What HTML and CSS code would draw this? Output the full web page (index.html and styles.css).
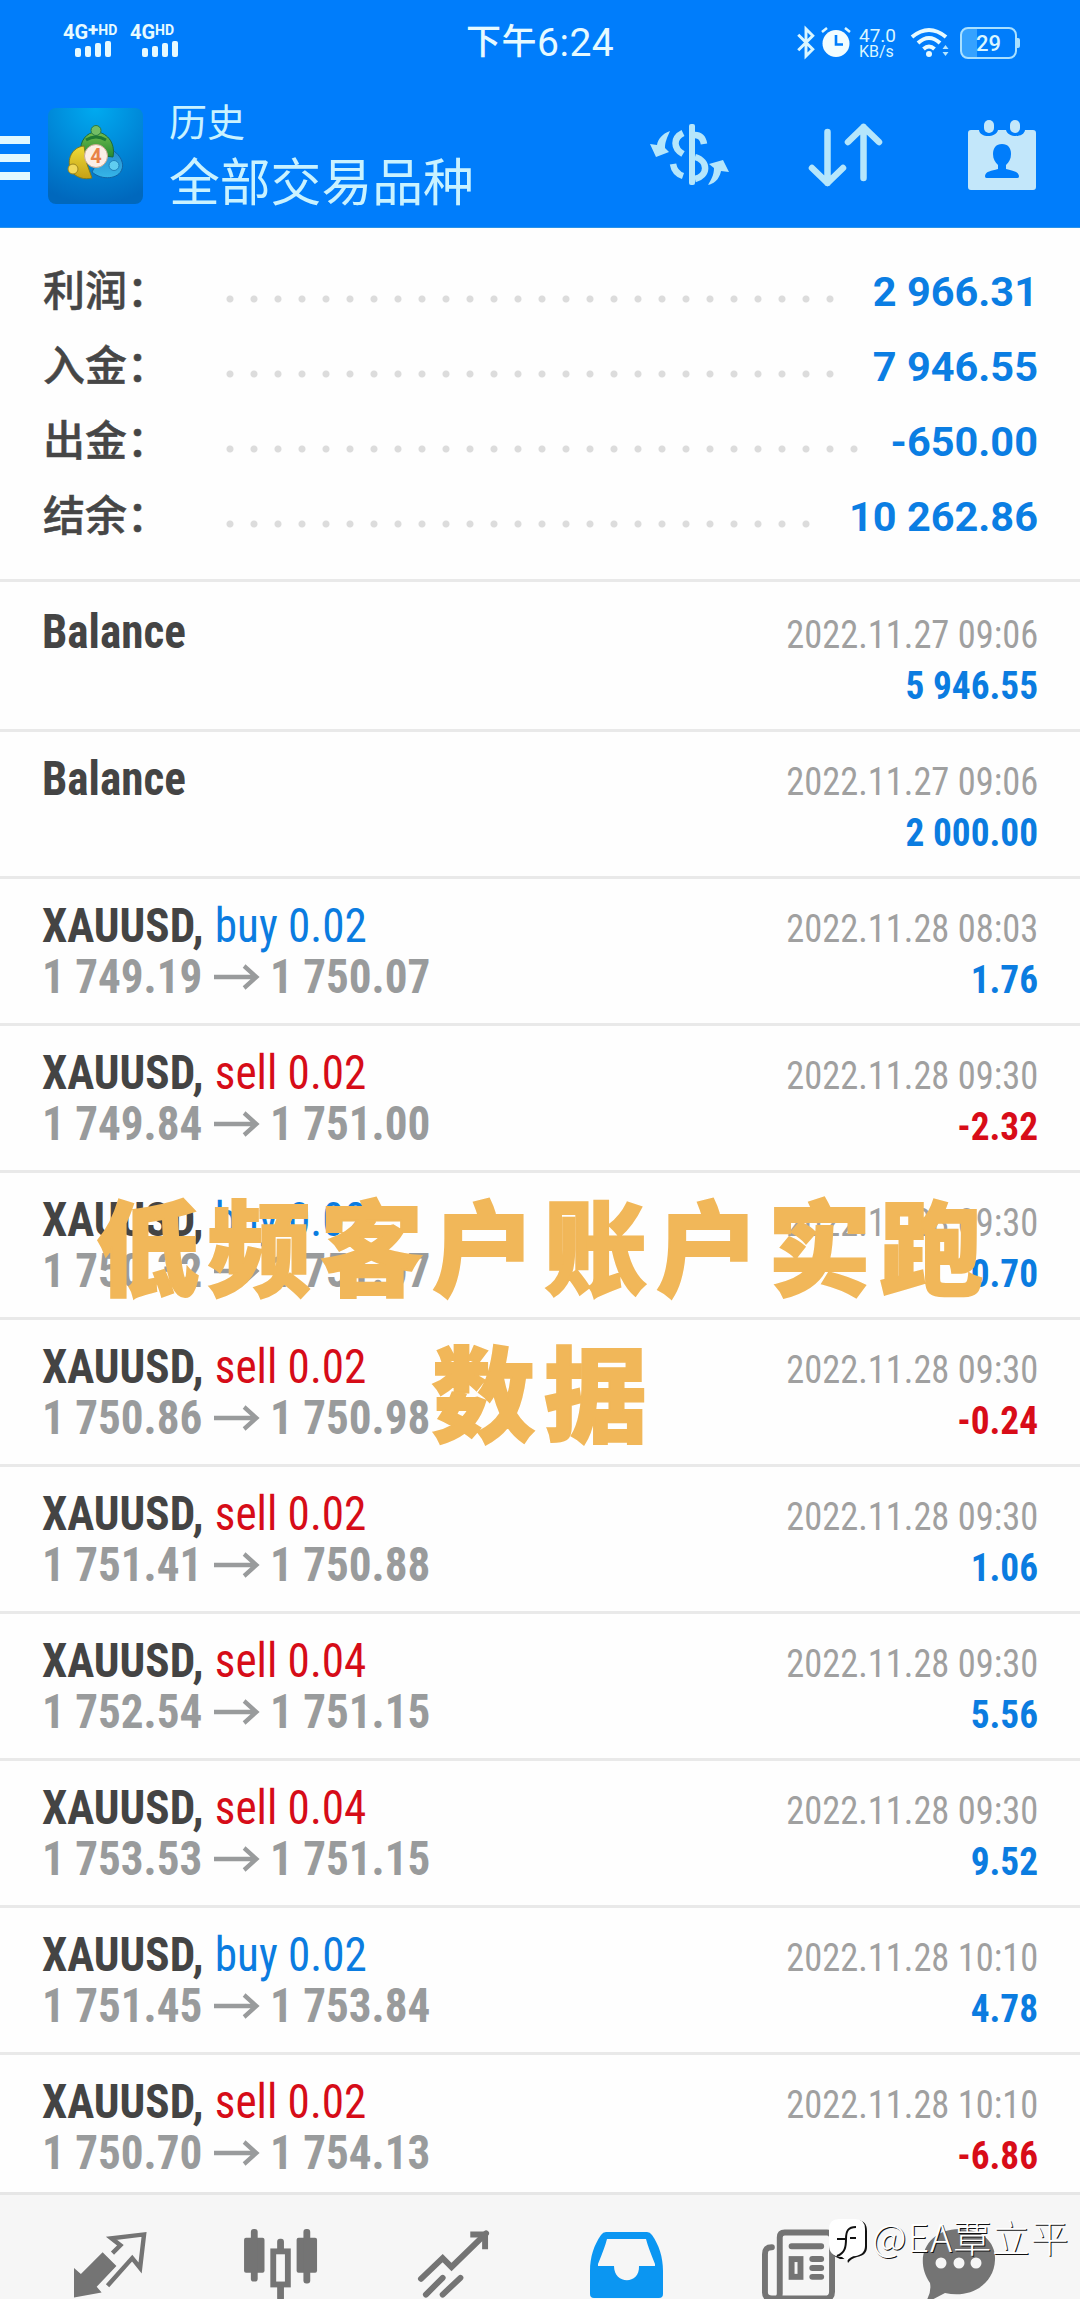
FILE: index.html
```html
<!DOCTYPE html>
<html lang="zh-CN">
<head>
<meta charset="utf-8">
<title>历史</title>
<link rel="stylesheet" href="styles.css">
</head>
<body>
<div class="phone">
  <header class="top">
    <div class="status">
      <div class="sims">
        <div class="sim"><div class="net">4G<b>+</b><sup>HD</sup></div><div class="bars"><i></i><i></i><i></i><i></i></div></div>
        <div class="sim second"><div class="net">4G<sup>HD</sup></div><div class="bars"><i></i><i></i><i></i><i></i></div></div>
      </div>
      <div class="clock"><span>下午</span>6:24</div>
      <div class="indicators">
        <svg class="bt" viewBox="0 0 20 32"><path d="M2 8l15 15-7 7V2l7 7L2 24" fill="none" stroke="#d9f6ff" stroke-width="3"/></svg>
        <svg class="alarm" viewBox="0 0 30 32"><circle cx="15" cy="17.500" r="13.500" fill="#f2fdff"/><path d="M1 6l5-4M29 6l-5-4" stroke="#d9f6ff" stroke-width="2.500"/><path d="M15 9v9.500h7" fill="none" stroke="#007dfb" stroke-width="2.600"/></svg>
        <div class="speed"><span>47.0</span><span>KB/s</span></div>
        <svg class="wifi" viewBox="0 0 38 30"><g fill="none" stroke="#e6faff" stroke-width="4"><path d="M1 9Q18-5 35 9"/><path d="M7 15Q18 5 29 15"/><path d="M12.500 21Q18 16 23.500 21"/></g><circle cx="18" cy="26" r="3" fill="#e6faff"/><path d="M31.500 21l3-4 3 4zM31.500 24l3 4 3-4z" fill="#b5e6ff"/></svg>
        <div class="battery"><span>29</span></div>
      </div>
    </div>
    <div class="appbar">
      <div class="menu"><i></i><i></i><i></i></div>
      <svg class="logo" viewBox="0 0 95 96">
        <defs>
          <radialGradient id="lg" cx=".5" cy="0" r="1"><stop offset="0" stop-color="#00aaf0"/><stop offset=".55" stop-color="#0085d6"/><stop offset="1" stop-color="#0068bd"/></radialGradient>
          <linearGradient id="gr" x2="0" y2="1"><stop stop-color="#73bd4d"/><stop offset="1" stop-color="#258b32"/></linearGradient>
          <linearGradient id="ye" x2="0" y2="1"><stop stop-color="#f0dc38"/><stop offset="1" stop-color="#c4a016"/></linearGradient>
          <linearGradient id="bl" x2="0" y2="1"><stop stop-color="#2488cc"/><stop offset="1" stop-color="#35b5e8"/></linearGradient>
        </defs>
        <rect width="95" height="96" rx="8" fill="url(#lg)"/>
        <path d="M57 39c12 3 20 14 17 22-3 10-20 12-30 3z" fill="url(#bl)" stroke="#1264a5"/>
        <path d="M33 45c-2-12 6-21 15-21s20 9 17 25z" fill="url(#gr)" stroke="#1c6a3a"/>
        <path d="M38 32q10-6 20 0" fill="none" stroke="#1f7a33" stroke-width="3"/>
        <path d="M36 38c-12 1-18 14-13 24 4 8 14 10 21 8l-5-14z" fill="url(#ye)" stroke="#7d7a20"/>
        <circle cx="48" cy="22.500" r="5" fill="#72bd65" stroke="#287b43"/>
        <circle cx="25" cy="61" r="5" fill="#f1d95c" stroke="#9b861b"/>
        <circle cx="66" cy="57.500" r="5" fill="#60cdf0" stroke="#2080b9"/>
        <circle cx="48" cy="48" r="11.500" fill="#fbeee6" stroke="#c9a890"/>
        <text x="48" y="55" text-anchor="middle" class="logo-num">4</text>
      </svg>
      <div class="titles"><div class="t1">历史</div><div class="t2">全部交易品种</div></div>
      <div class="actions">
        <svg class="a-cur" viewBox="0 0 79 62"><g fill="#b5e6fb"><path d="M20 7C12 10 8 15 7 21L0 20l6 13 13-5-4-4c0-6 2-10 5-17z"/><path d="M58 61c9-2 12-9 13-14l8 1-6-12-14 4 5 4c0 7-3 12-6 17z"/><rect x="39" y="0" width="6" height="61" rx="2"/></g><g fill="none" stroke="#b5e6fb" stroke-width="6.500"><path d="M33 9C23 14 23 24 33 30M23 40c1 6 4 10 10 12"/><path d="M45 11c5 0 8 3 9 9M45 33c14 4 13 19 0 22"/></g></svg>
        <svg class="a-sort" viewBox="0 0 73 64"><g fill="none" stroke="#b5e6fb" stroke-width="6.500" stroke-linecap="round" stroke-linejoin="round"><path d="M18.500 9v51M3 45l15.500 15L34 45M54.500 55V4M39 19L54.500 4 70 19"/></g></svg>
        <svg class="a-cal" viewBox="0 0 68 70"><path d="M3 10h8c1 8 17 8 19 0h8c2 8 18 8 19 0h8q3 0 3 3v54q0 3-3 3H3q-3 0-3-3V13q0-3 3-3z" fill="#c3e7fa"/><rect x="16" y="0" width="10" height="13" rx="5" fill="#c3e7fa"/><rect x="42" y="0" width="10" height="13" rx="5" fill="#c3e7fa"/><path d="M34 24c6 0 9 4 9 10 0 5-2 8-5 11v4c7 2 12 2 13 7 0 2-1 2-3 2H20c-2 0-3 0-3-2 1-5 6-5 13-7v-4c-3-3-5-6-5-11 0-6 3-10 9-10z" fill="#007dfb"/></svg>
      </div>
    </div>
  </header>

  <section class="summary">
    <div class="sum"><span class="lab">利润：</span><i class="dots"></i><b>2 966.31</b></div>
    <div class="sum"><span class="lab">入金：</span><i class="dots"></i><b>7 946.55</b></div>
    <div class="sum"><span class="lab">出金：</span><i class="dots"></i><b>-650.00</b></div>
    <div class="sum"><span class="lab">结余：</span><i class="dots"></i><b>10 262.86</b></div>
  </section>

  <main class="deals" id="deals"></main>

  <nav class="tabs">
    <svg viewBox="0 0 74 66"><path d="M29 20L43 34 23 55 28 61 0 66V36L7 42z" fill="#747474"/><path d="M39 21l8-8-9-7L71 2l-4 34-8-10-25 28" fill="none" stroke="#747474" stroke-width="4.500"/></svg>
    <svg viewBox="2 0 75 66"><g fill="#747474"><rect y="5" width="21" height="36" rx="2"/><rect x="7" y="-4" width="7" height="54" rx="3"/><rect x="54" y="5" width="21" height="36" rx="2"/><rect x="61" y="-4" width="7" height="56" rx="3"/><rect x="34" y="6" width="7" height="64" rx="3"/></g><rect x="30" y="19" width="15" height="34" fill="#f6f6f6" stroke="#747474" stroke-width="6"/></svg>
    <svg viewBox="0 0 74 66"><g fill="none" stroke="#747474" stroke-width="6" stroke-linecap="round"><path d="M3 47L25 26l9 9L69 1"/><path d="M8 63l17-17M25 63l18-17"/></g><path d="M53-1h18v18h-6V5H53z" fill="#747474"/></svg>
    <svg viewBox="0 0 73 66"><path d="M16 0h41q3 0 5 3c7 10 11 22 11 36v23q0 4-4 4H4q-4 0-4-4V39C0 25 4 13 11 3q2-3 5-3z" fill="#0b96f2"/><path d="M17 7h39q2 8 9 25v2H49c1 19-25 19-25 0H8v-2q7-17 9-25z" fill="#f6f6f6"/></svg>
    <svg viewBox="0 0 74 66"><g fill="none" stroke="#747474" stroke-width="6" stroke-linecap="round"><path d="M10 15c-5 0-7 2-7 7v39q0 6 7 6h54q7 0 7-7V5q0-5-5-5H23q-5 0-5 5v57q0 5-4 5"/><path d="M30 14h30M51 27h9M51 36h9M51 45h9"/></g><rect x="30" y="27" width="9" height="18" fill="none" stroke="#747474" stroke-width="6"/></svg>
    <svg class="chat" viewBox="0 0 73 66"><path d="M37-3c25 0 37 15 36 31-1 24-24 39-50 33L2 72q8-10 6-21C-10 24 8-3 37-3z" fill="#747474"/><g fill="#f6f6f6"><circle cx="19" cy="31" r="5.500"/><circle cx="37" cy="31" r="5.500"/><circle cx="54" cy="31" r="5.500"/></g></svg>
  </nav>

  <div class="caption">低频客户账户实跑<br>数据</div>
  <div class="mark">
    <svg viewBox="0 0 38 44"><path d="M11 1h16q11 0 11 11v16c0 6-4 9-10 10-4 1-7 3-9 6l-1-4H11Q1 36 1 28V11Q1 1 11 1z" fill="#111"/><path d="M10 0h16q10 0 10 10v17c0 6-4 9-9 10-4 0-7 2-9 5l-5-4C3 38 0 32 0 26V10Q0 0 10 0z" fill="#fff"/><path d="M8 37c8-3 9-9 9-17 0-8 2-12 10-12M8 20h9M21 19h6" fill="none" stroke="#111" stroke-width="2"/></svg>
    <span>@EA覃立平</span>
  </div>
</div>
<script src="deals.js"></script>
</body>
</html>
```
FILE: deals.js
```js
const deals = [
  { time: '2022.11.27 09:06', profit: '5 946.55' },
  { time: '2022.11.27 09:06', profit: '2 000.00' },
  { side: 'buy', lots: '0.02', open: '1 749.19', close: '1 750.07', time: '2022.11.28 08:03', profit: '1.76' },
  { side: 'sell', lots: '0.02', open: '1 749.84', close: '1 751.00', time: '2022.11.28 09:30', profit: '-2.32' },
  { side: 'buy', lots: '0.02', open: '1 750.32', close: '1 751.07', time: '2022.11.28 09:30', profit: '0.70' },
  { side: 'sell', lots: '0.02', open: '1 750.86', close: '1 750.98', time: '2022.11.28 09:30', profit: '-0.24' },
  { side: 'sell', lots: '0.02', open: '1 751.41', close: '1 750.88', time: '2022.11.28 09:30', profit: '1.06' },
  { side: 'sell', lots: '0.04', open: '1 752.54', close: '1 751.15', time: '2022.11.28 09:30', profit: '5.56' },
  { side: 'sell', lots: '0.04', open: '1 753.53', close: '1 751.15', time: '2022.11.28 09:30', profit: '9.52' },
  { side: 'buy', lots: '0.02', open: '1 751.45', close: '1 753.84', time: '2022.11.28 10:10', profit: '4.78' },
  { side: 'sell', lots: '0.02', open: '1 750.70', close: '1 754.13', time: '2022.11.28 10:10', profit: '-6.86' }
];
const arrow = '<svg class="arrow" viewBox="0 0 48 26"><path d="M0 13h45M32 2l13 11-13 11" fill="none" stroke="currentColor" stroke-width="4.5"/></svg>';
document.getElementById('deals').innerHTML = deals.map(d => `
  <article class="deal">
    <div class="left">
      ${d.side
        ? `<div class="l1"><b>XAUUSD,</b><span class="${d.side}">${d.side} ${d.lots}</span></div>
           <div class="l2"><b>${d.open}</b>${arrow}<b>${d.close}</b></div>`
        : '<div class="l1"><b>Balance</b></div>'}
    </div>
    <div class="right">
      <div class="time">${d.time}</div>
      <div class="profit ${d.profit[0] === '-' ? 'neg' : ''}">${d.profit}</div>
    </div>
  </article>`).join('');
```
FILE: styles.css
```css
* { box-sizing: border-box; }
body { margin: 0; background: #fefefe; font-family: Roboto, "Noto Sans CJK SC", sans-serif; }
.phone { position: relative; width: 1080px; height: 2299px; overflow: hidden; display: flex; flex-direction: column; }
svg { display: block; flex: none; overflow: visible; }

.top { height: 228px; flex: none; background: #007dfb; color: #d9f6ff; border-bottom: 1px solid #2a93e8; }
.status { height: 84px; display: grid; grid-template-columns: 1fr 148px 1fr; }
.sims { display: flex; gap: 8px; padding: 23px 0 0 63px; color: #e6faff; }
.sim { width: 59px; }
.net { font: 700 20px/18px Roboto, sans-serif; display: flex; }
.net b { font-size: 19px; line-height: 13px; }
.net sup { font-size: 14px; line-height: 14px; vertical-align: baseline; }
.bars { display: flex; align-items: flex-end; gap: 4px; height: 16px; padding-left: 12px; }
.bars i { width: 6px; border-radius: 2px; background: #e6faff; height: 9px; }
.bars i:nth-child(2) { height: 11px; }
.bars i:nth-child(3) { height: 14px; }
.bars i:nth-child(4) { height: 16px; }
.clock { font-size: 39px; line-height: 42px; padding-top: 22px; white-space: nowrap; color: #e6faff; font-weight: 450; display: flex; letter-spacing: 0.5px; }
.clock span { font-size: 35px; }
.indicators { display: flex; padding: 27px 0 0 182px; }
.bt { width: 20px; height: 31px; }
.alarm { width: 30px; height: 32px; margin: -1px 0 0 5px; }
.speed { width: 40px; margin-left: 8px; font-size: 19px; line-height: 17px; display: flex; flex-direction: column; }
.speed span:last-child { font-size: 16px; line-height: 15px; }
.wifi { width: 38px; height: 30px; margin: 1px 0 0 12px; }
.battery { width: 57px; height: 32px; margin-left: 11px; border: 2px solid #a9e0ff; border-radius: 8px; background: linear-gradient(90deg, #35a2ff 28%, transparent 28%); font: 500 22px/29px Roboto, sans-serif; text-align: center; position: relative; }
.battery::after { content: ""; position: absolute; right: -5px; top: 9px; width: 3px; height: 10px; background: #a9e0ff; border-radius: 0 2px 2px 0; }

.appbar { display: flex; height: 143px; }
.menu { width: 48px; padding-top: 52px; display: flex; flex-direction: column; gap: 10px; }
.menu i { width: 30px; height: 8px; background: #e2f9ff; }
.logo { width: 95px; height: 96px; margin-top: 24px; }
.logo-num { font: 700 20px Roboto, sans-serif; fill: #e88247; }
.titles { margin-left: 26px; padding-top: 13px; font-family: "Noto Sans CJK SC", sans-serif; color: #c9f2ff; width: 310px; white-space: nowrap; }
.t1 { font-size: 38px; line-height: 46px; }
.t2 { font-size: 50.8px; line-height: 72px; }
.actions { display: flex; flex: 1; padding: 36px 44px 0 171px; justify-content: space-between; }
.a-cur { width: 79px; height: 62px; margin-top: 4px; }
.a-sort { width: 73px; height: 64px; margin: 3px 7px 0 0; }
.a-cal { width: 68px; height: 70px; }

.summary { height: 351px; flex: none; padding: 26px 42px 0 43px; }
.sum { height: 75px; display: flex; align-items: center; }
.lab { width: 175px; margin-top: -8px; font: 500 42px/75px "Noto Sans CJK SC", sans-serif; color: #464646; -webkit-text-stroke: 0.5px #464646; }
.dots { flex: 1; height: 10px; margin: 14px 28px 0 0; background: radial-gradient(circle, #dcdcdc 3px, transparent 4px) 0 0 / 24px 10px repeat-x; }
.sum b { font-size: 41.5px; line-height: 75px; color: #0b7ee3; }

.deals { flex: none; height: 1613px; overflow: hidden; }
.deal { height: 147px; border-top: 3px solid #e9e9e9; padding: 21px 42px 0; display: flex; justify-content: space-between; font-stretch: 75%; }
.deal:first-child { height: 150px; padding-top: 24px; }
.left { transform: scaleX(.94); transform-origin: 0 0; }
.l1, .l2 { font-size: 48px; line-height: 52px; display: flex; white-space: nowrap; }
.l1 { color: #444; gap: 12px; }
.l2 { color: #999b9c; gap: 12px; align-items: center; margin-top: -1px; }
.arrow { width: 48px; height: 26px; }
.buy { color: #0b7ce0; }
.sell { color: #d60c18; }
.right { text-align: right; font-size: 39.5px; line-height: 51px; padding-top: 3px; color: #a0a0a0; }
.time { transform: scaleX(.922); transform-origin: 100% 0; }
.profit { font-weight: 700; color: #0b7ce0; transform: scaleX(.945); transform-origin: 100% 0; }
.profit.neg { color: #d80c18; }

.tabs { flex: 1; background: #f6f6f6; border-top: 3px solid #e6e6e6; display: flex; gap: 99px; padding: 37px 0 0 74px; }
.tabs svg { width: 73px; height: 66px; }
.tabs .chat { margin-left: -12px; }

.caption { position: absolute; left: 4px; top: 1171px; width: 1080px; text-align: center; font: 900 103px/146px "Noto Sans CJK SC", sans-serif; letter-spacing: 9px; color: #f1b759; -webkit-text-stroke: 2px #f1b759; }
.mark { position: absolute; left: 829px; top: 2219px; display: flex; gap: 5px; }
.mark svg { width: 38px; height: 44px; }
.mark span { font: 300 37.8px/34px "Noto Sans CJK SC", sans-serif; letter-spacing: 1px; color: #fff; text-shadow: 1px 1px 0 #111; white-space: nowrap; }
```
